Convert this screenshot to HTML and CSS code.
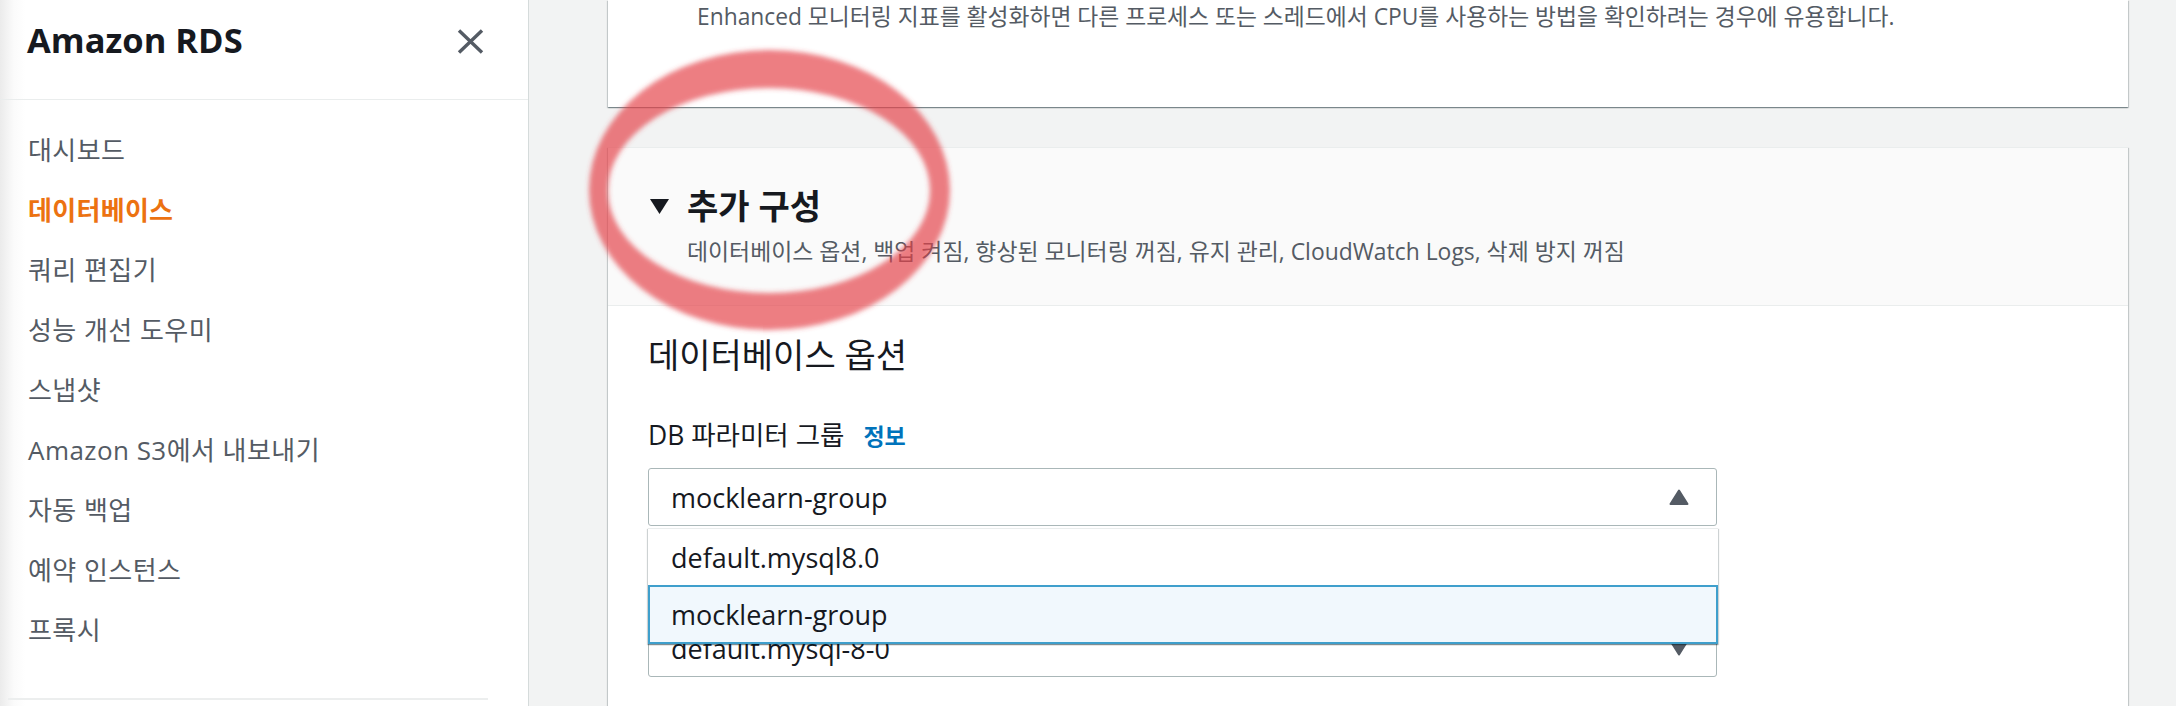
FILE: index.html
```html
<!DOCTYPE html>
<html lang="ko">
<head>
<meta charset="utf-8">
<title>Amazon RDS</title>
<link rel="stylesheet" href="styles.css">
</head>
<body>
<aside class="sidebar">
  <div class="sidebar-header">
    <h1 class="sidebar-title">Amazon RDS</h1>
    <button class="close-btn" aria-label="닫기">
      <svg width="27" height="25" viewBox="0 0 27 25"><path d="M2 1.5 L25 23.5 M25 1.5 L2 23.5" stroke="#545b64" stroke-width="3.4" fill="none"/></svg>
    </button>
  </div>
  <nav>
    <ul class="nav-list">
      <li>대시보드</li>
      <li class="active">데이터베이스</li>
      <li>쿼리 편집기</li>
      <li>성능 개선 도우미</li>
      <li>스냅샷</li>
      <li>Amazon S3에서 내보내기</li>
      <li>자동 백업</li>
      <li>예약 인스턴스</li>
      <li>프록시</li>
    </ul>
  </nav>
  <div class="sidebar-divider"></div>
</aside>

<main class="main">
  <section class="card card-top">
    <p class="desc">Enhanced 모니터링 지표를 활성화하면 다른 프로세스 또는 스레드에서 CPU를 사용하는 방법을 확인하려는 경우에 유용합니다.</p>
  </section>

  <section class="card card-expand">
    <header class="expand-header">
      <div class="expand-title-row">
        <svg class="caret" width="19" height="15" viewBox="0 0 19 15"><polygon points="0,0 19,0 9.5,15" fill="#16191f"/></svg>
        <h2 class="expand-title">추가 구성</h2>
      </div>
      <p class="expand-sub">데이터베이스 옵션, 백업 켜짐, 향상된 모니터링 꺼짐, 유지 관리, CloudWatch Logs, 삭제 방지 꺼짐</p>
    </header>

    <div class="expand-body">
      <h3 class="section-heading">데이터베이스 옵션</h3>

      <div class="field">
        <div class="field-label">DB 파라미터 그룹<a class="info-link">정보</a></div>
        <div class="select-wrap">
          <div class="select">
            <span>mocklearn-group</span>
            <svg class="select-arrow" width="20" height="16" viewBox="0 0 20 16"><polygon points="10,1.5 18.5,15 1.5,15" fill="#545b64" stroke="#545b64" stroke-width="2" stroke-linejoin="round"/></svg>
          </div>
          <ul class="dropdown">
            <li class="option">default.mysql8.0</li>
            <li class="option highlighted">mocklearn-group</li>
          </ul>
        </div>
      </div>

      <div class="field field-second">
        <div class="select">
          <span>default.mysql-8-0</span>
          <svg class="select-arrow" width="20" height="16" viewBox="0 0 20 16"><polygon points="1.5,1 18.5,1 10,14.5" fill="#545b64" stroke="#545b64" stroke-width="2" stroke-linejoin="round"/></svg>
        </div>
      </div>
    </div>
  </section>
</main>

<svg class="annotation" width="420" height="320" viewBox="0 0 420 320" aria-hidden="true">
  <defs>
    <filter id="soft" x="-10%" y="-10%" width="120%" height="120%">
      <feGaussianBlur stdDeviation="2.4"/>
    </filter>
  </defs>
  <path filter="url(#soft)" fill="rgba(228,64,72,0.68)" fill-rule="evenodd"
    d="M29 160 A180.5 140 0 1 0 390 160 A180.5 140 0 1 0 29 160 Z
       M48 160.5 A161 102.5 0 1 0 370 160.5 A161 102.5 0 1 0 48 160.5 Z"/>
</svg>
</body>
</html>
```

FILE: styles.css
```css
html, body {
  margin: 0;
  padding: 0;
}

body {
  width: 2176px;
  height: 706px;
  overflow: hidden;
  display: flex;
  position: relative;
  font-family: "Open Sans", "Noto Sans CJK KR", sans-serif;
  color: #16191f;
  background: #f2f3f3;
}

/* Sidebar */
.sidebar {
  width: 528px;
  flex: none;
  border-right: 1px solid #d5dbdb;
  background: linear-gradient(90deg, #ebebeb 0, #fbfbfb 14px, #fff 26px);
  display: flex;
  flex-direction: column;
}

.sidebar-header {
  height: 100px;
  box-sizing: border-box;
  border-bottom: 1px solid #eaeded;
  display: flex;
  justify-content: space-between;
  align-items: flex-start;
  padding: 18px 44px 0 27px;
}

.sidebar-title {
  margin: 0;
  font-size: 34.5px;
  font-weight: 700;
  line-height: 44px;
  color: #16191f;
}

.close-btn {
  border: 0;
  background: none;
  padding: 0;
  margin-top: 11px;
  width: 27px;
  height: 25px;
  display: block;
}

.close-btn svg {
  display: block;
}

.nav-list {
  list-style: none;
  margin: 0;
  padding: 20px 0 0 28px;
  font-size: 26px;
  letter-spacing: 0.45px;
  line-height: 60px;
  color: #545b64;
}

.nav-list .active {
  color: #ec7211;
  font-weight: 700;
  letter-spacing: 0.3px;
}

.sidebar-divider {
  margin: 38px 40px 0 8px;
  border-top: 2px solid #eceeee;
}

/* Main */
.main {
  flex: 1;
  padding: 0 48px 0 79px;
  background: #f2f3f3;
}

.card {
  background: #fff;
  box-shadow: 0 1px 1px 0 rgba(0, 28, 36, 0.3), 1px 1px 1px 0 rgba(0, 28, 36, 0.15), -1px 1px 1px 0 rgba(0, 28, 36, 0.15);
}

.card-top {
  height: 107px;
  box-sizing: border-box;
  padding: 2px 40px 0 89px;
}

.desc {
  margin: 0;
  font-size: 22.8px;
  line-height: 30px;
  color: #545b64;
}

.card-expand {
  margin-top: 40px;
  border-top: 1px solid #eaeded;
  min-height: 600px;
}

.expand-header {
  background: #fafafa;
  border-bottom: 1px solid #eaeded;
  padding: 37px 40px 38px 42px;
}

.expand-title-row {
  display: flex;
  align-items: center;
  gap: 18px;
}

.caret {
  display: block;
  flex: none;
}

.expand-title {
  margin: 0;
  font-size: 34px;
  font-weight: 700;
  line-height: 42px;
  color: #16191f;
}

.expand-sub {
  margin: 10px 0 0 37px;
  font-size: 22.9px;
  line-height: 30px;
  color: #545b64;
}

.expand-body {
  padding: 29px 40px 60px;
}

.section-heading {
  margin: 0;
  font-size: 34px;
  font-weight: 400;
  line-height: 40px;
  color: #16191f;
}

.field {
  margin-top: 45px;
}

.field-label {
  font-size: 26.5px;
  line-height: 30px;
  color: #16191f;
}

.info-link {
  margin-left: 19px;
  font-size: 23px;
  font-weight: 700;
  color: #0073bb;
}

.select-wrap {
  position: relative;
  width: 1069px;
  margin-top: 17px;
}

.select {
  width: 1069px;
  height: 58px;
  box-sizing: border-box;
  border: 1px solid #aab7b8;
  border-radius: 3px;
  background: #fff;
  display: flex;
  align-items: center;
  justify-content: space-between;
  padding: 0 27px 0 22px;
  font-size: 27px;
  color: #16191f;
}

.select-arrow {
  display: block;
  flex: none;
}

.dropdown {
  position: absolute;
  top: 60px;
  left: 0;
  width: 1070px;
  margin: 0;
  padding: 0;
  list-style: none;
  background: #fff;
  border-top: 1px solid #eaeded;
  box-shadow: 0 1px 1px 0 rgba(0, 28, 36, 0.3), 1px 1px 1px 0 rgba(0, 28, 36, 0.15), -1px 1px 1px 0 rgba(0, 28, 36, 0.15);
  z-index: 3;
}

.option {
  height: 56px;
  box-sizing: border-box;
  display: flex;
  align-items: center;
  padding-left: 23px;
  font-size: 27px;
  color: #16191f;
}

.option.highlighted {
  height: 59px;
  border: 2px solid #3f9fcc;
  background: #f1f8fd;
  padding-left: 21px;
}

.field-second {
  margin-top: 93px;
}

.annotation {
  position: absolute;
  left: 560px;
  top: 30px;
  pointer-events: none;
  z-index: 10;
}
```
